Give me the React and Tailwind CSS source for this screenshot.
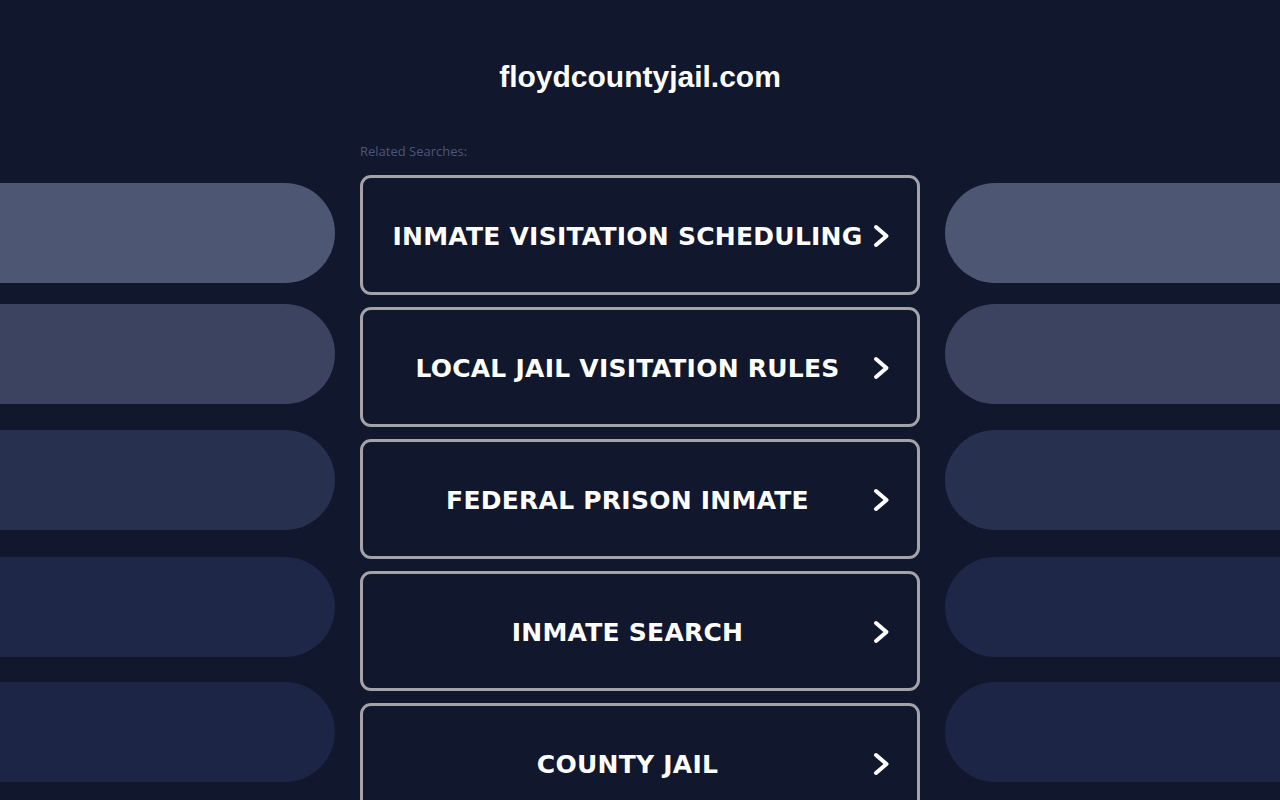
import React from "react";

const pills = [
  { c: "bg-[#4d5673]", mt: "mt-[43px]" },
  { c: "bg-[#3b4360]", mt: "mt-[21px]" },
  { c: "bg-[#283050]", mt: "mt-[26px]" },
  { c: "bg-[#1f2748]", mt: "mt-[27px]" },
  { c: "bg-[#1d2546]", mt: "mt-[25px]" },
];

const items = [
  "INMATE VISITATION SCHEDULING",
  "LOCAL JAIL VISITATION RULES",
  "FEDERAL PRISON INMATE",
  "INMATE SEARCH",
  "COUNTY JAIL",
];

function Chevron() {
  return (
    <svg width="20" height="24" viewBox="0 0 20 24" className="-ml-[20px] mt-[2px] shrink-0">
      <polyline
        points="4,3 14.5,12 4,21"
        fill="none"
        stroke="white"
        strokeWidth="4"
        strokeLinecap="round"
        strokeLinejoin="round"
      />
    </svg>
  );
}

export default function App() {
  return (
    <div className="w-full h-[800px] overflow-hidden bg-[#11172c]">
      <div className="pt-[57px] h-[140px] text-center">
        <h1 className="text-white font-bold text-[30px] leading-[40px] font-['Liberation_Sans',Arial,sans-serif]">
          floydcountyjail.com
        </h1>
      </div>
      <div className="flex">
        <div className="w-[335px] shrink-0 flex flex-col">
          {pills.map((p, i) => (
            <div key={i} className={`${p.mt} h-[100px] rounded-r-[50px] ${p.c}`} />
          ))}
        </div>
        <div className="w-[560px] ml-[25px] shrink-0 flex flex-col">
          <div className="h-[35px] pt-[2px] text-[13px] leading-[18px] text-[#4d567a] font-['Open_Sans',sans-serif]">
            Related Searches:
          </div>
          <div className="flex flex-col gap-[12px]">
            {items.map((t) => (
              <div
                key={t}
                className="h-[120px] border-[3px] border-[#a3a3a8] rounded-[11px] flex items-center pr-[25px]"
              >
                <span className="flex-1 text-center text-white font-bold text-[25px] leading-[30px] mt-[3px] tracking-[0.25px] font-['DejaVu_Sans',Verdana,sans-serif]">
                  {t}
                </span>
                <Chevron />
              </div>
            ))}
          </div>
        </div>
        <div className="flex-1 ml-[25px] flex flex-col">
          {pills.map((p, i) => (
            <div key={i} className={`${p.mt} h-[100px] rounded-l-[50px] ${p.c}`} />
          ))}
        </div>
      </div>
    </div>
  );
}
